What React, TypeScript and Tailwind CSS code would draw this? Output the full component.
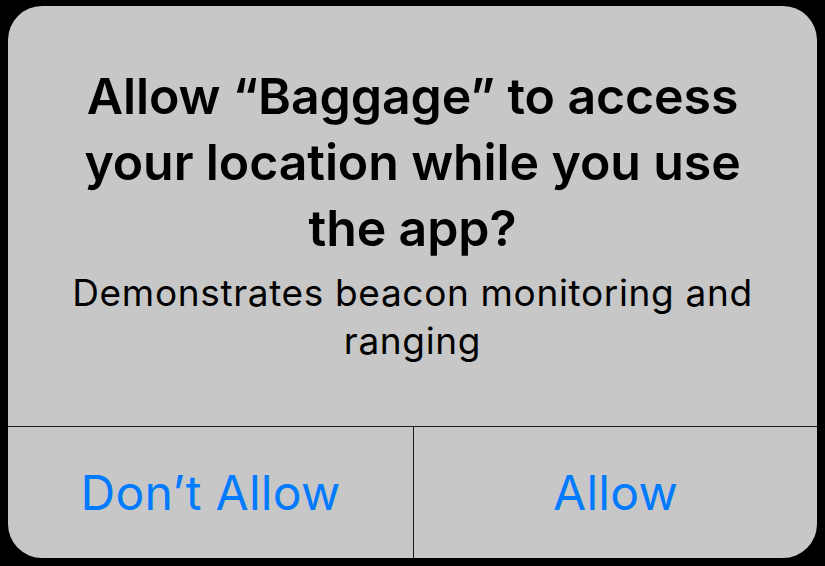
export default function App() {
  return (
    <div className="w-[825px] h-[566px] bg-black pt-[6px] pl-[8px] pr-[8px] pb-[8px]" style={{ fontFamily: "Inter, 'Liberation Sans', sans-serif" }}>
      <div className="w-full h-full bg-[#c7c7c7] rounded-[34px] flex flex-col overflow-hidden">
        <div className="flex-1 flex flex-col items-center pt-[57px] px-[60px]">
          <div className="text-[50px] leading-[66px] font-semibold text-black text-center tracking-[-0.1px]">
            Allow “Baggage” to access your location while you use the app?
          </div>
          <div className="mt-[8px] text-[37px] leading-[48px] text-black text-center tracking-[0.65px]">
            Demonstrates beacon monitoring and ranging
          </div>
        </div>
        <div className="h-[1px] bg-[#1a1a1a]" />
        <div className="h-[131px] flex">
          <div className="w-[405px] flex items-center justify-center text-[48px] text-[#007aff] tracking-[0.3px]">Don’t Allow</div>
          <div className="w-[1px] bg-[#1a1a1a]" />
          <div className="flex-1 flex items-center justify-center text-[48px] text-[#007aff] tracking-[0.3px]">Allow</div>
        </div>
      </div>
    </div>
  );
}
